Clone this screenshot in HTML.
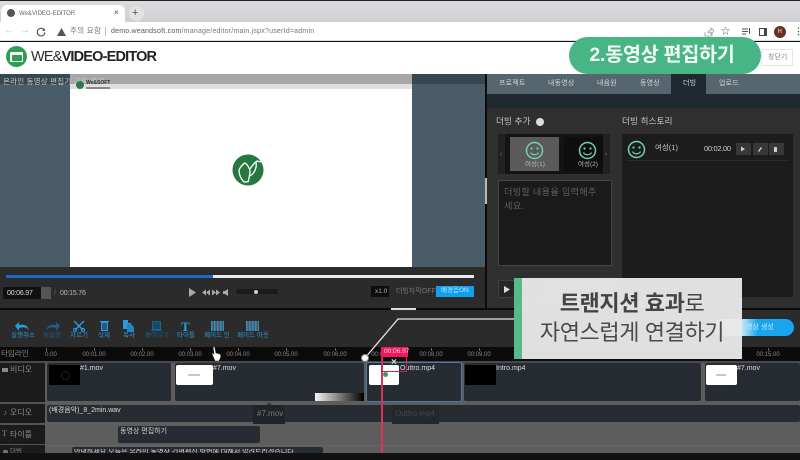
<!DOCTYPE html>
<html><head><meta charset="utf-8"><style>
*{box-sizing:border-box}
html,body{margin:0;padding:0;width:800px;height:460px;overflow:hidden;background:#111;font-family:"Liberation Sans","Noto Sans CJK KR",sans-serif}
.a{position:absolute}
.t{position:absolute;white-space:nowrap;line-height:1}
.clip{position:absolute;background:#262c31;border-radius:2px}
.thumb{position:absolute;background:#fff;border-radius:2px}
.lab{position:absolute;top:333px;font-size:6.5px;color:#2d97d2;white-space:nowrap;line-height:1;width:60px;text-align:center}
.tick{position:absolute;top:352px;font-size:6px;color:#888;white-space:nowrap;line-height:1;width:40px;text-align:center}
.tm{position:absolute;top:348px;width:1px;height:3px;background:#666}
.tl{position:absolute;left:0;font-size:8px;color:#8a8a8a;white-space:nowrap;line-height:1}
.tab{position:absolute;top:80px;font-size:7px;color:#cfd6da;white-space:nowrap;line-height:1;letter-spacing:.2px}
</style></head><body>
<div class="a" style="left:0;top:0;width:800px;height:460px;background:#111;overflow:hidden">

<!-- browser chrome -->
<div class="a" style="left:0;top:0;width:800px;height:1.5px;background:#222"></div>
<div class="a" style="left:0;top:1px;width:800px;height:21px;background:linear-gradient(#dcdcde,#cfcfd2)"></div>
<div class="a" style="left:1px;top:5px;width:124px;height:18px;background:#fff;border-radius:6px 6px 0 0"></div>
<div class="a" style="left:7px;top:9px;width:8px;height:8px;border-radius:50%;background:#555"></div>
<div class="t" style="left:19px;top:10.5px;font-size:6px;color:#666">We&amp;VIDEO-EDITOR</div>
<div class="t" style="left:114px;top:9px;font-size:8px;color:#444">×</div>
<div class="a" style="left:129px;top:6px;width:15px;height:15px;border-radius:50%;background:#e2e2e4"></div>
<div class="t" style="left:132px;top:8px;font-size:11px;color:#555">+</div>
<div class="a" style="left:0;top:22px;width:800px;height:19px;background:#fff;border-bottom:1px solid #ddd"></div>
<div class="t" style="left:4px;top:26px;font-size:10px;color:#c4c4c4">←</div>
<div class="t" style="left:20px;top:26px;font-size:10px;color:#c4c4c4">→</div>
<svg class="a" style="left:36px;top:27px" width="10" height="10" viewBox="0 0 10 10"><path d="M8.3 3.2A3.8 3.8 0 1 0 8.8 5.5" fill="none" stroke="#555" stroke-width="1.2"/><path d="M8.8 1v3H6z" fill="#555"/></svg>
<svg class="a" style="left:57px;top:28px" width="9" height="8" viewBox="0 0 9 8"><path d="M4.5 0L9 8H0z" fill="#555"/></svg>
<div class="t" style="left:70px;top:27px;font-size:7.5px;color:#777;letter-spacing:.3px">주의 요함</div>
<div class="a" style="left:105px;top:27px;width:1px;height:9px;background:#bbb"></div>
<div class="t" style="left:111px;top:28px;font-size:7px;color:#777;letter-spacing:.22px"><span style="color:#555">demo.weandsoft.com</span>/manage/editor/main.jspx?userId=admin</div>
<svg class="a" style="left:704px;top:27px" width="10" height="10" viewBox="0 0 10 10"><path d="M1 5v4h7V6M4 6c0-2 1-3 3-3V1l3 3-3 3V5C6 5 5 5 4 6z" fill="none" stroke="#999" stroke-width=".8"/></svg>
<div class="t" style="left:721px;top:27px;font-size:9px;color:#555">☆</div>
<svg class="a" style="left:742px;top:28px" width="9" height="8" viewBox="0 0 9 8"><path d="M0 1h6M0 3.5h6M0 6h4M7.5 0v6" stroke="#555" stroke-width="1" fill="none"/></svg>
<div class="a" style="left:759px;top:28px;width:8px;height:8px;border:1.2px solid #444;border-right-width:3px"></div>
<div class="a" style="left:774px;top:26px;width:12px;height:12px;border-radius:50%;background:#6b2f1e"></div>
<div class="t" style="left:777.5px;top:29px;font-size:6px;color:#eee">H</div>
<div class="t" style="left:794px;top:27px;font-size:9px;color:#555;font-weight:bold">⋮</div>

<!-- app header -->
<div class="a" style="left:0;top:42px;width:800px;height:32px;background:#fff"></div>
<div class="a" style="left:6px;top:46px;width:21px;height:21px;border-radius:50%;background:#2f9e55"></div>
<div class="a" style="left:10px;top:52px;width:13px;height:10px;background:#fff;border-radius:1px"></div>
<div class="a" style="left:11.5px;top:55px;width:10px;height:5.5px;background:#2f9e55"></div>
<div class="t" style="left:31px;top:50px;font-size:14.5px;color:#2c2c2c;letter-spacing:-.82px">WE&amp;<b style="color:#222">VIDEO-EDITOR</b></div>
<div class="a" style="left:761px;top:49px;width:32px;height:17px;background:#fff;border:1px solid #e4e4e4;border-radius:1px"></div>
<div class="t" style="left:768px;top:54px;font-size:7px;color:#888">창닫기</div>

<!-- video area -->
<div class="a" style="left:0;top:74px;width:485px;height:194px;background:#4a5c67"></div>
<div class="a" style="left:0;top:74px;width:70px;height:10px;background:#37464f"></div>
<div class="a" style="left:70px;top:74px;width:342px;height:194px;background:#fff"></div>
<div class="a" style="left:70px;top:74px;width:342px;height:10px;background:#a7a7a7"></div>
<div class="a" style="left:70px;top:84px;width:342px;height:5px;background:#dfdfdf"></div>
<div class="a" style="left:412px;top:74px;width:73px;height:10px;background:#37464f"></div>
<div class="t" style="left:3px;top:78px;font-size:7.5px;color:#c5ccd0;letter-spacing:.2px">온라인 동영상 편집기 교육 영상</div>
<div class="a" style="left:76px;top:81px;width:8px;height:8px;border-radius:50%;background:#2d7a48"></div>
<div class="t" style="left:86px;top:81px;font-size:5px;font-weight:bold;color:#333">We&amp;SOFT</div>
<div class="a" style="left:86px;top:87px;width:24px;height:1.5px;background:#888"></div>
<svg class="a" style="left:232px;top:154px" width="32" height="32" viewBox="0 0 32 32"><circle cx="16" cy="16" r="15.5" fill="#27773f"/><path d="M7 16C9 12 11 10 13 9c3 2 5 6 5 9-.5 4-1 7-2 10M18 15c2-3 4-6 7-8l4 1M7 16c0 5 2 9 5 12 2 0 4 0 5-1M24 8c1 5-1 11-6 14" fill="none" stroke="#fff" stroke-width="1.3"/></svg>
<div class="a" style="left:485px;top:74px;width:2px;height:234px;background:#0c0c0c"></div>

<!-- player bar -->
<div class="a" style="left:0;top:267px;width:485px;height:41px;background:#2b2b2b"></div>
<div class="a" style="left:6px;top:275px;width:207px;height:2.5px;background:#1e68c6"></div>
<div class="a" style="left:213px;top:275px;width:261px;height:2.5px;background:#e8e8e8"></div>
<div class="a" style="left:3px;top:287px;width:38px;height:12px;background:#111"></div>
<div class="t" style="left:7px;top:289.5px;font-size:7px;letter-spacing:-.2px;color:#ddd">00:06.97</div>
<div class="a" style="left:41px;top:287px;width:10px;height:12px;background:#555"></div>
<div class="t" style="left:54px;top:290px;font-size:7px;color:#666">/</div>
<div class="t" style="left:60px;top:289.5px;font-size:7px;letter-spacing:-.2px;color:#bbb">00:15.76</div>
<svg class="a" style="left:188px;top:287px" width="44" height="11" viewBox="0 0 44 11"><path d="M1 1l7 4.5-7 4.5zM18 5.500l4-3v6zM14 5.500l4-3v6zM24 2.500l4 3-4 3zM28 2.500l4 3-4 3z" fill="#aaa"/><path d="M35 4h2l3-2v7l-3-2h-2z" fill="#aaa"/></svg>
<div class="a" style="left:236px;top:289px;width:42px;height:5px;background:#1b1b1b;border-radius:3px"></div>
<div class="a" style="left:254px;top:289.5px;width:4px;height:4px;background:#ccc;border-radius:50%"></div>
<div class="a" style="left:371px;top:286px;width:18px;height:11px;background:#0d0d0d"></div>
<div class="t" style="left:375px;top:288.5px;font-size:6.5px;color:#aaa">x1.0</div>
<div class="t" style="left:396px;top:288px;font-size:7px;color:#777">더빙자막OFF</div>
<div class="a" style="left:436px;top:286px;width:38px;height:11px;background:#0fa0f0"></div>
<div class="t" style="left:441px;top:288px;font-size:6.5px;color:#bfe6fb">배경음ON</div>

<!-- right panel -->
<div class="a" style="left:487px;top:74px;width:313px;height:20px;background:#56666f"></div>
<div class="a" style="left:671px;top:74px;width:35px;height:20px;background:#1e2a30"></div>
<div class="tab" style="left:499px">프로젝트</div>
<div class="tab" style="left:548px">내동영상</div>
<div class="tab" style="left:597px">내음원</div>
<div class="tab" style="left:640px">동영상</div>
<div class="tab" style="left:683px">더빙</div>
<div class="tab" style="left:719px">업로드</div>
<div class="a" style="left:487px;top:94px;width:313px;height:14px;background:#1e2a30"></div>
<div class="a" style="left:487px;top:108px;width:313px;height:200px;background:#2f2f2f"></div>
<div class="a" style="left:485px;top:178px;width:2px;height:26px;background:#bbb"></div>
<div class="t" style="left:496px;top:117px;font-size:8.5px;color:#c8c8c8;letter-spacing:.2px">더빙 추가</div>
<div class="a" style="left:536px;top:118px;width:8px;height:8px;border-radius:50%;background:#ddd"></div>
<div class="t" style="left:622px;top:117px;font-size:8.5px;color:#c8c8c8;letter-spacing:.2px">더빙 히스토리</div>
<div class="a" style="left:498px;top:134px;width:112px;height:40px;background:#222"></div>
<div class="a" style="left:505px;top:134px;width:98px;height:40px;background:#141414"></div>
<div class="t" style="left:500px;top:151px;font-size:7px;color:#777">‹</div>
<div class="t" style="left:605px;top:151px;font-size:7px;color:#777">›</div>
<div class="a" style="left:510px;top:137px;width:49px;height:34px;background:#5a5a5a"></div>
<div class="a" style="left:564px;top:137px;width:39px;height:34px;background:#0e0e0e"></div>
<svg class="a" style="left:525px;top:141px" width="19" height="19" viewBox="0 0 19 19"><circle cx="9.500" cy="9.500" r="8" fill="none" stroke="#6fd3b0" stroke-width="1.500"/><circle cx="6.500" cy="7.500" r="1.100" fill="#6fd3b0"/><circle cx="12.500" cy="7.500" r="1.100" fill="#6fd3b0"/><path d="M5.500 11.500c1.500 3 6.500 3 8 0" fill="none" stroke="#6fd3b0" stroke-width="1.200"/></svg>
<svg class="a" style="left:578px;top:141px" width="19" height="19" viewBox="0 0 19 19"><circle cx="9.500" cy="9.500" r="8" fill="none" stroke="#6fd3b0" stroke-width="1.500"/><circle cx="6.500" cy="7.500" r="1.100" fill="#6fd3b0"/><circle cx="12.500" cy="7.500" r="1.100" fill="#6fd3b0"/><path d="M5.500 11.500c1.500 3 6.500 3 8 0" fill="none" stroke="#6fd3b0" stroke-width="1.200"/></svg>
<div class="t" style="left:525px;top:162px;font-size:6.5px;color:#bbb">여성(1)</div>
<div class="t" style="left:578px;top:162px;font-size:6.5px;color:#bbb">여성(2)</div>
<div class="a" style="left:498px;top:180px;width:114px;height:86px;background:#1a1a1a;border:1px solid #444"></div>
<div class="t" style="left:504px;top:185px;font-size:9.2px;line-height:14px;color:#5f5f5f;letter-spacing:.25px">더빙할 내용을 입력해주<br>세요.</div>
<div class="a" style="left:622px;top:134px;width:171px;height:163px;background:#1c1c1c"></div>
<svg class="a" style="left:627px;top:140px" width="19" height="19" viewBox="0 0 19 19"><circle cx="9.500" cy="9.500" r="8" fill="none" stroke="#6fd3b0" stroke-width="1.500"/><circle cx="6.500" cy="7.500" r="1.100" fill="#6fd3b0"/><circle cx="12.500" cy="7.500" r="1.100" fill="#6fd3b0"/><path d="M5.500 11.500c1.500 3 6.500 3 8 0" fill="none" stroke="#6fd3b0" stroke-width="1.200"/></svg>
<div class="t" style="left:655px;top:144px;font-size:7.500px;color:#c8c8c8">여성(1)</div>
<div class="t" style="left:704px;top:145px;font-size:7.500px;color:#d0d0d0;letter-spacing:-.3px">00:02.00</div>
<div class="a" style="left:736px;top:143px;width:15px;height:12px;background:#383838"></div>
<div class="a" style="left:753px;top:143px;width:15px;height:12px;background:#383838"></div>
<div class="a" style="left:769px;top:143px;width:15px;height:12px;background:#383838"></div>
<svg class="a" style="left:741px;top:146px" width="40" height="6" viewBox="0 0 40 6"><path d="M0 .5l4 2.500-4 2.500zM17 5l3-4 1 1-3 4zM33 1h3v5h-3z" fill="#ccc"/></svg>
<div class="a" style="left:627px;top:160px;width:162px;height:1px;background:#2b2b2b"></div>
<div class="a" style="left:498px;top:280px;width:40px;height:18px;border:1px solid #3e3e3e;background:#262626"></div>
<svg class="a" style="left:504px;top:286px" width="6" height="7" viewBox="0 0 6 7"><path d="M0 0l6 3.500L0 7z" fill="#ddd"/></svg>

<!-- toolbar -->
<div class="a" style="left:0;top:308px;width:800px;height:2px;background:#0a0a0a"></div>
<div class="a" style="left:391px;top:308px;width:25px;height:2px;background:#ddd"></div>
<div class="a" style="left:0;top:310px;width:800px;height:37px;background:#2b2b2b"></div>
<svg class="a" style="left:15px;top:322px" width="15" height="9" viewBox="0 0 15 9"><path d="M4 0v3c5-1 8 0 10 5-3-3-6-3-10-2v3L0 4z" fill="#2a9bdc"/></svg>
<svg class="a" style="left:45px;top:322px" width="15" height="9" viewBox="0 0 15 9"><path d="M11 0v3C6 2 3 3 1 8c3-3 6-3 10-2v3l4-5z" fill="#1d5f86"/></svg>
<svg class="a" style="left:73px;top:320px" width="12" height="12" viewBox="0 0 12 12"><path d="M1 1l9 9M11 1L2 10" stroke="#2a9bdc" stroke-width="1.500" fill="none"/><circle cx="2" cy="10" r="1.600" fill="none" stroke="#2a9bdc"/><circle cx="10" cy="10" r="1.600" fill="none" stroke="#2a9bdc"/></svg>
<div class="a" style="left:101px;top:322px;width:7px;height:9px;border:1.500px solid #2a9bdc;background:#1a5f88"></div>
<div class="a" style="left:100px;top:320.500px;width:9px;height:1.500px;background:#2a9bdc"></div>
<svg class="a" style="left:123px;top:320px" width="11" height="12" viewBox="0 0 11 12"><path d="M0 0h5v3h3v6H0z" fill="#2a9bdc"/><path d="M4 4h4l3 3v5H4z" fill="#2385bd"/></svg>
<div class="a" style="left:152px;top:321px;width:9px;height:9px;border:1px solid #1d5f86;background:#174b68"></div>
<div class="a" style="left:151px;top:330px;width:11px;height:1px;background:#1d5f86"></div>
<div class="t" style="left:181px;top:320px;font-size:13px;color:#2a9bdc;font-family:'Liberation Serif',serif;font-weight:bold">T</div>
<div class="a" style="left:211px;top:321px;width:13px;height:10px;background:repeating-linear-gradient(90deg,#2a8fc9 0 1.500px,#555 1.500px 3px)"></div>
<div class="a" style="left:246px;top:321px;width:13px;height:10px;background:repeating-linear-gradient(90deg,#2a8fc9 0 1.500px,#555 1.500px 3px)"></div>
<div class="lab" style="left:-7px">실행취소</div>
<div class="lab" style="left:22px;color:#1d5f86">재실행</div>
<div class="lab" style="left:49px">자르기</div>
<div class="lab" style="left:74px">삭제</div>
<div class="lab" style="left:99px">복사</div>
<div class="lab" style="left:127px;color:#1d5f86">붙여넣기</div>
<div class="lab" style="left:156px">타이틀</div>
<div class="lab" style="left:187px">페이드 인</div>
<div class="lab" style="left:223px">페이드 아웃</div>
<div class="a" style="left:714px;top:319px;width:80px;height:17px;border-radius:9px;background:linear-gradient(90deg,#c4e6f7 0,#c4e6f7 28px,#18a5ee 44px)"></div>
<div class="t" style="left:746px;top:324px;font-size:7px;color:#c8ecff">영상 생성</div>

<!-- ruler -->
<div class="a" style="left:0;top:347px;width:800px;height:14px;background:#0b0b0b"></div>
<div class="t" style="left:1px;top:350px;font-size:7.500px;color:#888">타임라인</div>
<div class="tick" style="left:31px">0.00</div>
<div class="tick" style="left:74px">00:01.00</div>
<div class="tick" style="left:122px">00:02.00</div>
<div class="tick" style="left:170px">00:03.00</div>
<div class="tick" style="left:218px">00:04.00</div>
<div class="tick" style="left:266px">00:05.00</div>
<div class="tick" style="left:315px">00:06.00</div>
<div class="tick" style="left:363px">00:07.00</div>
<div class="tick" style="left:411px">00:08.00</div>
<div class="tick" style="left:459px">00:09.00</div>
<div class="tick" style="left:748px">00:15.00</div>
<div class="tm" style="left:46px"></div><div class="tm" style="left:94px"></div><div class="tm" style="left:142px"></div><div class="tm" style="left:190px"></div><div class="tm" style="left:238px"></div><div class="tm" style="left:286px"></div><div class="tm" style="left:335px"></div><div class="tm" style="left:431px"></div><div class="tm" style="left:479px"></div><div class="tm" style="left:768px"></div>

<!-- tracks -->
<div class="a" style="left:0;top:361px;width:800px;height:99px;background:#5d5d5d"></div>
<div class="a" style="left:0;top:361px;width:45px;height:99px;background:#1b1b1b"></div>
<div class="a" style="left:0;top:402px;width:45px;height:2px;background:#555"></div>
<div class="a" style="left:0;top:423px;width:45px;height:2px;background:#555"></div>
<div class="a" style="left:0;top:444px;width:45px;height:1px;background:#555"></div>
<div class="a" style="left:0;top:361px;width:800px;height:2px;background:#4a4a4a"></div>
<div class="a" style="left:45px;top:445px;width:755px;height:1px;background:#666"></div>
<div class="a" style="left:2px;top:368px;width:6px;height:4px;background:#888"></div>
<div class="tl" style="left:10px;top:366px">비디오</div>
<div class="t" style="left:3px;top:409px;font-size:8px;color:#888">♪</div>
<div class="tl" style="left:10px;top:409px">오디오</div>
<div class="t" style="left:2px;top:430px;font-size:8px;color:#888;font-family:'Liberation Serif',serif">T</div>
<div class="tl" style="left:10px;top:431px">타이틀</div>
<div class="tl" style="left:10px;top:449px;font-size:6.500px">더빙</div>
<div class="a" style="left:3px;top:450px;width:5px;height:5px;background:#777;border-radius:2px"></div>

<div class="clip" style="left:47px;top:363px;width:124px;height:38px"></div>
<div class="clip" style="left:175px;top:363px;width:189px;height:38px"></div>
<div class="clip" style="left:366px;top:362px;width:96px;height:40px;border:1.500px solid #4d7ba8"></div>
<div class="clip" style="left:464px;top:363px;width:237px;height:38px"></div>
<div class="clip" style="left:705px;top:363px;width:95px;height:38px"></div>
<div class="a" style="left:49px;top:365px;width:31px;height:20px;background:#000"></div>
<div class="a" style="left:61px;top:371px;width:9px;height:9px;border:1px dotted #444;border-radius:50%"></div>
<div class="thumb" style="left:176px;top:365px;width:37px;height:20px"></div>
<div class="a" style="left:188px;top:374px;width:12px;height:2px;background:#c9c7bd"></div>
<div class="thumb" style="left:369px;top:365px;width:30px;height:20px"></div>
<div class="a" style="left:383px;top:372px;width:5px;height:5px;background:#3d9a5c;border-radius:50%"></div>
<div class="a" style="left:465px;top:365px;width:31px;height:20px;background:#000"></div>
<div class="thumb" style="left:706px;top:365px;width:31px;height:20px"></div>
<div class="a" style="left:716px;top:374px;width:10px;height:2px;background:#c9c7bd"></div>
<div class="t" style="left:80px;top:365px;font-size:7px;color:#ddd">#1.mov</div>
<div class="t" style="left:213px;top:365px;font-size:7px;color:#ddd">#7.mov</div>
<div class="t" style="left:400px;top:365px;font-size:7px;color:#ddd">Outtro.mp4</div>
<div class="t" style="left:496px;top:365px;font-size:7px;color:#ddd">Intro.mp4</div>
<div class="t" style="left:737px;top:365px;font-size:7px;color:#ddd">#7.mov</div>
<div class="a" style="left:315px;top:393px;width:49px;height:8px;background:linear-gradient(90deg,#f4f4f4,#8a8a8a 45%,#000)"></div>

<div class="clip" style="left:47px;top:405px;width:753px;height:17px"></div>
<div class="t" style="left:49px;top:407px;font-size:7px;color:#ddd">(배경음악)_8_2min.wav</div>
<div class="a" style="left:253px;top:405px;width:32px;height:19px;background:#1f2428"></div>
<div class="a" style="left:266px;top:402px;border:3px solid transparent;border-top:0;border-bottom:3px solid #3a3f44"></div>
<div class="t" style="left:257px;top:410px;font-size:8px;color:#777">#7.mov</div>
<div class="a" style="left:392px;top:405px;width:47px;height:19px;background:#22282c"></div>
<div class="t" style="left:395px;top:410px;font-size:8px;color:#3f474c">Outtro.mp4</div>
<div class="clip" style="left:118px;top:426px;width:142px;height:17px"></div>
<div class="t" style="left:120px;top:428px;font-size:7px;color:#d5d5d5">동영상 편집하기</div>
<div class="a" style="left:45px;top:453px;width:755px;height:7px;background:#111"></div>
<div class="clip" style="left:72px;top:447px;width:251px;height:6px;border-radius:2px 2px 0 0"></div>
<div class="t" style="left:74px;top:449px;font-size:7px;color:#d5d5d5;height:4px;overflow:hidden">안녕하세요 오늘은 온라인 동영상 간편편집 방법에 대해서 알려드리겠습니다.</div>
<div class="a" style="left:0;top:453px;width:45px;height:7px;background:#111"></div>

<!-- playhead -->
<div class="a" style="left:381px;top:347px;width:27px;height:10px;background:#f0175c"></div>
<div class="t" style="left:384px;top:349px;font-size:6.500px;color:#fbd5e2">00:06.97</div>
<div class="a" style="left:381px;top:357px;width:1.500px;height:96px;background:#e0305f"></div>
<div class="a" style="left:381px;top:357px;width:26px;height:15px;border:1px solid #c9254f;border-top:0"></div>
<div class="t" style="left:391px;top:358px;font-size:10px;color:#ddd;font-weight:bold">×</div>

<!-- callouts -->
<svg class="a" style="left:0;top:0" width="800" height="460" viewBox="0 0 800 460"><path d="M365 358L398 319H520" fill="none" stroke="#e8e8e8" stroke-width="1.300"/><circle cx="365" cy="358" r="3.500" fill="#fff" stroke="#888"/></svg>
<div class="a" style="left:514px;top:278px;width:228px;height:81px;background:rgba(232,232,232,.96)"></div>
<div class="a" style="left:514px;top:278px;width:8px;height:81px;background:#58b98a"></div>
<div class="t" style="left:522px;top:293px;width:220px;text-align:center;font-size:22px;color:#444;letter-spacing:-.4px"><b>트랜지션 효과</b>로</div>
<div class="t" style="left:522px;top:322px;width:220px;text-align:center;font-size:22px;color:#4a4a4a;letter-spacing:-.4px">자연스럽게 연결하기</div>
<div class="a" style="left:569px;top:37px;width:192px;height:37px;border-radius:19px;background:#47b585"></div>
<div class="t" style="left:569px;top:46px;width:186px;text-align:center;font-size:19.500px;font-weight:bold;color:#f4fbf7;letter-spacing:-.2px">2.동영상 편집하기</div>

<!-- cursor -->
<svg class="a" style="left:211px;top:346px" width="11" height="15" viewBox="0 0 11 15"><path d="M2 1c1-1 2 0 2 1l1 5 4 1c1 1 1 3 0 5l-1 2H4L1 8c0-1 1-1 2 0z" fill="#fff" stroke="#222" stroke-width=".6"/></svg>
</div>
</body></html>
